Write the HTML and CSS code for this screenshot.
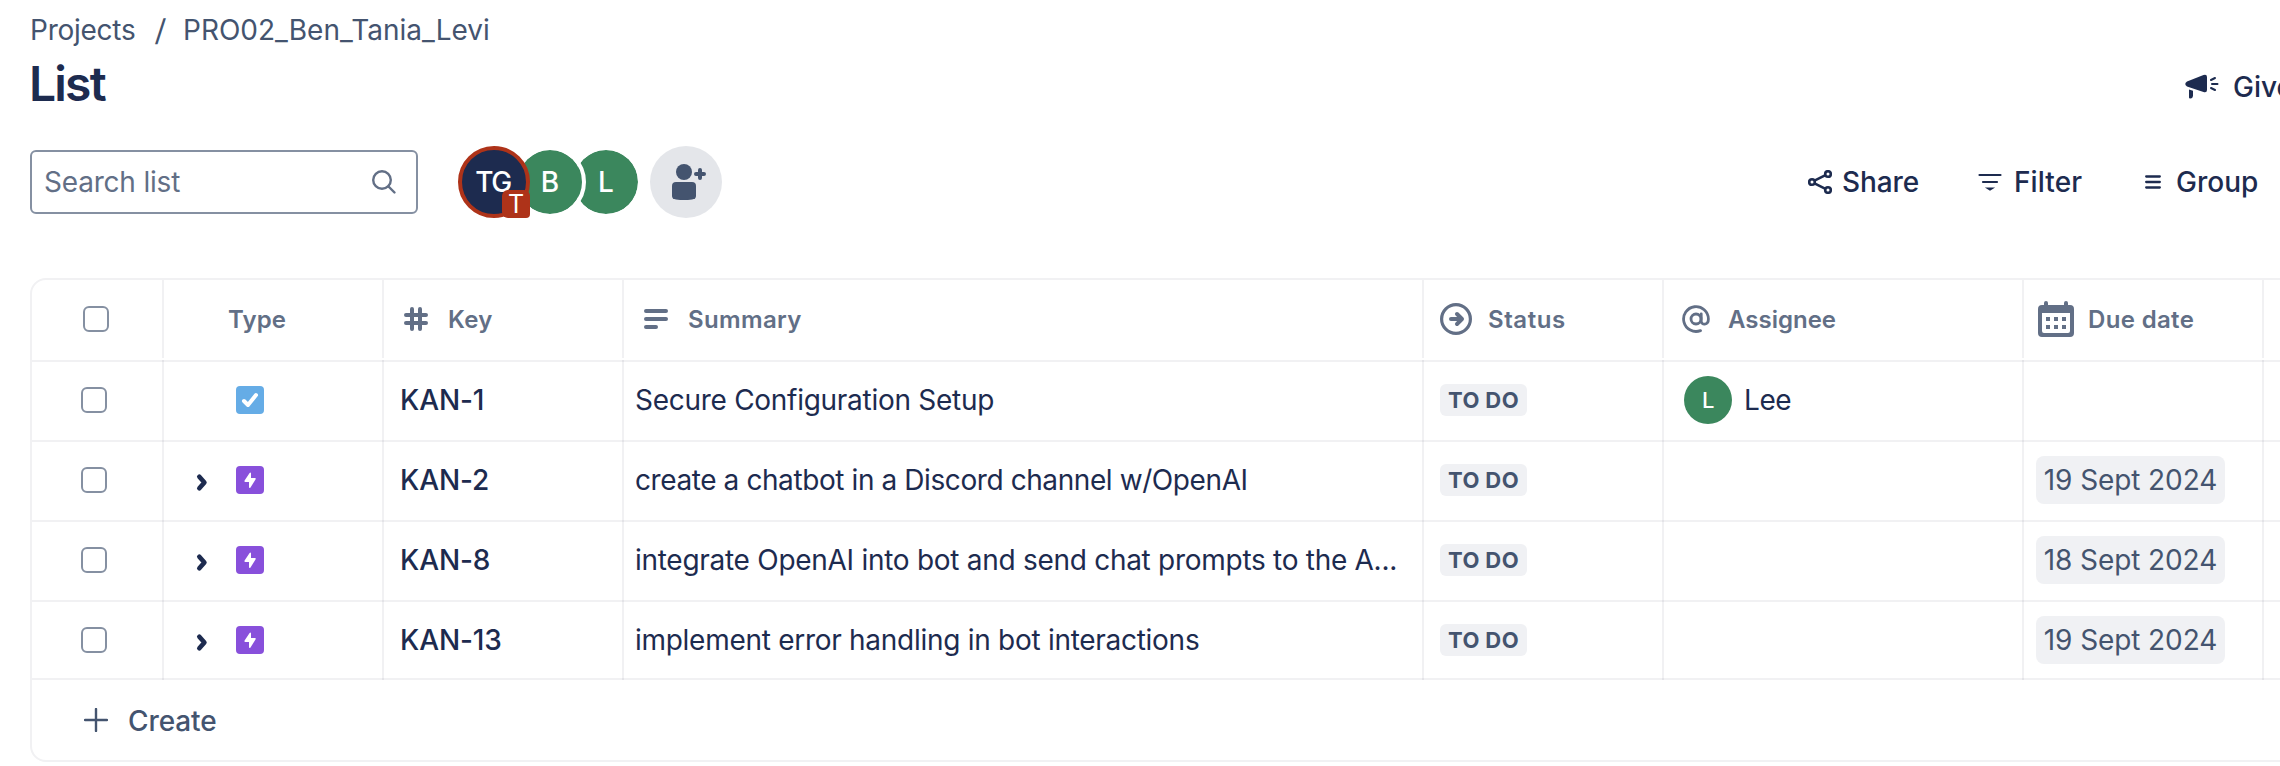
FILE: index.html
```html
<!DOCTYPE html>
<html lang="en">
<head>
<meta charset="utf-8">
<title>List</title>
<link rel="stylesheet" href="styles.css">
</head>
<body>
<svg class="sprite" aria-hidden="true">
  <symbol id="chevron" viewBox="0 0 12 18"><path d="M3 3.500L7.800 9 3 14.500" fill="none" stroke="#1d2b4f" stroke-width="4.400" stroke-linecap="round" stroke-linejoin="round"/></symbol>
  <symbol id="epic" viewBox="0 0 28 28"><rect width="28" height="28" rx="4" fill="#8850db"/><path d="M13.6 6.9L8.6 14.6Q8 16 9.4 16H13v5.2q.4 1.500 1.500.3l5-8Q20.200 12 19 12H15V7.200Q14.600 5.800 13.600 6.900z" fill="#fff"/></symbol>
  <symbol id="task" viewBox="0 0 28 28"><rect width="28" height="28" rx="4" fill="#65ace6"/><path d="M8 15l4 4 8-10" fill="none" stroke="#fff" stroke-width="4" stroke-linecap="round" stroke-linejoin="round"/></symbol>
</svg>
<main class="page">
  <nav class="crumbs"><span class="crumb-a">Projects</span><span class="slash">/</span><span class="crumb-b">PRO02_Ben_Tania_Levi</span></nav>
  <header class="title-row">
    <h1>List</h1>
    <div class="feedback">
      <svg width="34" height="26" viewBox="0 0 34 26"><path d="M2 7.500L18.500 1Q22 0 22 3V16q0 3-3.500 2L2 12.500Q-1.500 10 2 7.500z" fill="#1d2b4f"/><path d="M4 15.500l4 1.300v5.200q-.5 2.500-2.500 2.500T4 23z" fill="#1d2b4f"/><path d="M26 6l4-2M27 10h5.500M26 14l4 2" stroke="#1d2b4f" stroke-width="2" stroke-linecap="round"/></svg>
      <span>Give</span>
    </div>
  </header>
  <section class="toolbar">
    <div class="search"><span>Search list</span>
      <svg width="26" height="26" viewBox="0 0 26 26" fill="none" stroke="#626f86" stroke-width="2.400" stroke-linecap="round"><circle cx="11" cy="11" r="8.800"/><path d="M17.500 17.500l6 6"/></svg>
    </div>
    <div class="avatars">
      <div class="avatar tg">TG<span class="badge">T</span></div>
      <div class="avatar b">B</div>
      <div class="avatar l">L</div>
    </div>
    <div class="add">
      <svg width="72" height="72" viewBox="0 0 72 72"><g fill="#44546f"><circle cx="34" cy="26" r="8"/><path d="M26 36h16q4 0 4 4v10q0 3-4 3.500-8 1-16 0-4-.5-4-3.500V40q0-4 4-4z"/></g><path d="M46 28h8M50 24v8" stroke="#44546f" stroke-width="4" stroke-linecap="round"/></svg>
    </div>
    <div class="actions">
      <div class="action"><svg width="24" height="24" viewBox="0 0 24 24" fill="none" stroke="#1d2b4f" stroke-width="2.600"><circle cx="4" cy="12" r="2.800"/><circle cx="20" cy="4" r="2.800"/><circle cx="20" cy="20" r="2.800"/><path d="M6.500 10.700l11-5.500M6.500 13.300l11 5.500"/></svg><span class="share">Share</span></div>
      <div class="action"><svg width="24" height="24" viewBox="0 0 24 24" stroke="#1d2b4f" stroke-width="2.200" stroke-linecap="round"><path d="M1.500 5h21M5 12h14"/><path d="M10.500 18.500h3l-1.500 1z" fill="#1d2b4f"/></svg><span class="filter">Filter</span></div>
      <div class="action"><svg width="16" height="24" viewBox="0 0 16 24" stroke="#1d2b4f" stroke-width="2.300" stroke-linecap="round"><path d="M1.200 6.500h13.600M1.200 12h13.600M1.200 17.500h13.600"/></svg><span class="group">Group</span></div>
    </div>
  </section>
  <section class="table">
    <div class="row head">
      <div class="cell check"><i class="box"></i></div>
      <div class="cell type"><span>Type</span></div>
      <div class="cell key"><svg width="24" height="24" viewBox="0 0 24 24" stroke="#626f86" stroke-width="4" stroke-linecap="round"><path d="M2 8h20M2 16h20M8 2v20M16 2v20"/></svg><span>Key</span></div>
      <div class="cell summary"><svg width="24" height="20" viewBox="0 0 24 20" stroke="#626f86" stroke-width="4" stroke-linecap="round"><path d="M2 2h20M2 10h20M2 18h10"/></svg><span>Summary</span></div>
      <div class="cell status"><svg width="32" height="32" viewBox="0 0 32 32" fill="none" stroke="#626f86" stroke-width="3.200" stroke-linecap="round" stroke-linejoin="round"><circle cx="16" cy="16" r="14.400"/><path stroke-width="4" d="M11 16h10M17 11l5 5-5 5"/></svg><span>Status</span></div>
      <div class="cell assignee"><svg width="28" height="28" viewBox="0 0 28 28" fill="none" stroke="#626f86" stroke-width="2.800" stroke-linecap="round"><circle cx="14" cy="14" r="5"/><path d="M19.200 8.800V16c0 4.500 7.200 4.500 7.200-2A12.400 12.400 0 1 0 18.500 25.600"/></svg><span>Assignee</span></div>
      <div class="cell due"><svg width="36" height="36" viewBox="0 0 36 36" fill="#626f86"><path fill-rule="evenodd" d="M4 4h2V2q0-2 2-2t2 2v2h16V2q0-2 2-2t2 2v2h2q4 0 4 4v24q0 4-4 4H4q-4 0-4-4V8q0-4 4-4zM4 12v18q0 2 2 2h24q2 0 2-2V12z"/><path d="M8 16h4v4H8zM16 16h4v4h-4zM24 16h4v4h-4zM8 24h4v4H8zM16 24h4v4h-4zM24 24h4v4h-4z"/></svg><span>Due date</span></div>
      <div></div>
    </div>
    <div class="row first">
      <div class="cell check"><i class="box"></i></div>
      <div class="cell type"><svg class="kind" width="28" height="28"><use href="#task"/></svg></div>
      <div class="cell key">KAN-1</div>
      <div class="cell summary">Secure Configuration Setup</div>
      <div class="cell status"><span class="pill">TO DO</span></div>
      <div class="cell assignee"><span class="mini">L</span><span>Lee</span></div>
      <div class="cell due"></div><div></div>
    </div>
    <div class="row">
      <div class="cell check"><i class="box"></i></div>
      <div class="cell type"><svg class="chev" width="12" height="18"><use href="#chevron"/></svg><svg class="kind" width="28" height="28"><use href="#epic"/></svg></div>
      <div class="cell key">KAN-2</div>
      <div class="cell summary tight">create a chatbot in a Discord channel w/OpenAI</div>
      <div class="cell status"><span class="pill">TO DO</span></div>
      <div class="cell assignee"></div>
      <div class="cell due"><span class="date">19 Sept 2024</span></div><div></div>
    </div>
    <div class="row">
      <div class="cell check"><i class="box"></i></div>
      <div class="cell type"><svg class="chev" width="12" height="18"><use href="#chevron"/></svg><svg class="kind" width="28" height="28"><use href="#epic"/></svg></div>
      <div class="cell key">KAN-8</div>
      <div class="cell summary">integrate OpenAI into bot and send chat prompts to the A...</div>
      <div class="cell status"><span class="pill">TO DO</span></div>
      <div class="cell assignee"></div>
      <div class="cell due"><span class="date">18 Sept 2024</span></div><div></div>
    </div>
    <div class="row last">
      <div class="cell check"><i class="box"></i></div>
      <div class="cell type"><svg class="chev" width="12" height="18"><use href="#chevron"/></svg><svg class="kind" width="28" height="28"><use href="#epic"/></svg></div>
      <div class="cell key">KAN-13</div>
      <div class="cell summary">implement error handling in bot interactions</div>
      <div class="cell status"><span class="pill">TO DO</span></div>
      <div class="cell assignee"></div>
      <div class="cell due"><span class="date">19 Sept 2024</span></div><div></div>
    </div>
    <div class="create"><svg width="24" height="24" viewBox="0 0 24 24" stroke="#44546f" stroke-width="2.400" stroke-linecap="round"><path d="M12 1v22M1 12h22"/></svg><span>Create</span></div>
  </section>
</main>
</body>
</html>
```
FILE: styles.css
```css
* { box-sizing: border-box; }
body {
  margin: 0;
  overflow: hidden;
  background: #fff;
  color: #1d2b4f;
  font: 400 28px/40px Inter, "Liberation Sans", sans-serif;
  white-space: nowrap;
}
svg { display: block; flex: none; }
.sprite { position: absolute; width: 0; height: 0; }
.page { width: 2280px; height: 766px; padding: 10px 0 0 30px; overflow: hidden; }

.crumbs { display: flex; height: 40px; color: #44546f; }
.crumb-a { width: 124px; letter-spacing: -.25px; }
.slash { width: 27px; padding-left: 1px; font-size: 30px; transform: skewX(-3deg); }
.crumb-b { letter-spacing: 0; padding-left: 2px; }

.title-row { display: flex; align-items: center; justify-content: space-between; height: 66px; }
h1 { margin: 0; font-size: 48px; font-weight: 600; letter-spacing: -1.8px; line-height: 60px; margin-left: -1px; padding-top: 1px; }
.feedback { display: flex; align-items: center; gap: 14px; width: 95px; padding-top: 7px; font-weight: 500; }

.toolbar { display: flex; align-items: center; height: 72px; margin-top: 30px; }
.search {
  display: flex; align-items: center; justify-content: space-between;
  width: 388px; height: 64px; padding: 0 19px 0 12px;
  border: 2px solid #8590a2; border-radius: 6px;
  color: #626f86; letter-spacing: -.2px;
}
.avatars { display: flex; margin-left: 40px; }
.avatar {
  position: relative; display: grid; place-items: center;
  width: 72px; height: 72px; margin-right: -16px;
  border: 4px solid #fff; border-radius: 50%;
  background: #3b875d; background-clip: padding-box;
  color: #fff; font-weight: 500;
}
.tg { z-index: 3; border-color: #ae3319; background-color: #1d2b4f; background-clip: border-box; letter-spacing: -1.5px; padding-right: 2px; }
.b { z-index: 2; }
.l { z-index: 1; margin-right: 0; }
.badge {
  position: absolute; right: -4px; bottom: -4px; width: 28px; height: 28px;
  border-radius: 6px 6px 4px 6px; background: #ae3319; line-height: 29px; text-align: center;
  font-size: 25px; font-weight: 400; letter-spacing: 0;
}
.add { width: 72px; height: 72px; margin-left: 8px; border-radius: 50%; background: #e4e6ea; }
.actions { display: flex; margin-left: auto; padding-right: 22px; font-weight: 500; gap: 59px; }
.action { display: flex; align-items: center; }
.share { margin-left: 10px; width: 78px; letter-spacing: -.1px; }
.filter { margin-left: 12px; width: 70px; letter-spacing: .1px; }
.action:nth-child(2) { margin-left: -1px; }
.action:nth-child(3) { margin-left: 2px; }
.group { margin-left: 15px; width: 82px; }

.table { width: 2400px; margin-top: 60px; border: 2px solid #f1f1f3; border-radius: 16px; }
.row {
  display: grid;
  grid-template-columns: 132px 220px 240px 800px 240px 360px 240px 1fr;
  height: 80px; border-bottom: 2px solid rgba(15, 20, 50, .06);
}
.cell { display: flex; align-items: center; margin-bottom: -2px; padding-bottom: 4px; border-right: 2px solid rgba(15, 20, 50, .06); }
.first .cell { margin-top: -2px; padding-top: 2px; }
.last { height: 78px; }
.last .cell { padding-bottom: 2px; }
.check { padding-left: 49px; }
.box { width: 26px; height: 26px; border: 2px solid #8590a2; border-radius: 6px; }
.type { padding-left: 31px; }
.kind { margin-left: auto; margin-right: 118px; }
.chev { width: 13px; height: 19px; margin-top: 4px; margin-left: 1px; }
.key { padding-left: 16px; font-weight: 500; letter-spacing: -.1px; }
.summary { padding-left: 11px; letter-spacing: -.28px; }
.summary.tight { letter-spacing: -.41px; }
.status { padding-left: 16px; }
.pill {
  width: 87px; height: 32px; border-radius: 6px; background: #f0f1f4; color: #44546f;
  font-size: 22px; line-height: 33px; font-weight: 700; text-align: center; letter-spacing: .4px;
}
.assignee { padding-left: 20px; letter-spacing: -.4px; }
.mini {
  width: 48px; height: 48px; margin-right: 12px; border-radius: 50%;
  background: #3b875d; color: #fff; font-size: 22px; font-weight: 500; line-height: 48px; text-align: center;
}
.due { padding-left: 12px; }
.date { width: 189px; height: 48px; border-radius: 8px; background: #f0f1f4; color: #44546f; line-height: 48px; text-align: center; letter-spacing: -.1px; }

.head { height: 82px; color: #626f86; font-size: 24px; }
.head .cell { margin-bottom: 2px; padding-bottom: 0; letter-spacing: .35px; font-weight: 600; }
.head .cell span { padding-top: 2px; }
.head .check { padding-left: 51px; }
.head .type { padding-left: 64px; letter-spacing: .1px; }
.head .key { padding-left: 20px; gap: 20px; }
.head .summary { padding-left: 20px; gap: 20px; }
.head .status { letter-spacing: .55px; gap: 16px; }
.head .assignee { padding-left: 18px; gap: 18px; letter-spacing: 0; }
.head .due { padding-left: 14px; gap: 14px; }

.create { display: flex; align-items: center; gap: 20px; height: 80px; padding-left: 52px; color: #44546f; font-weight: 500; letter-spacing: -.1px; }
.create span { padding-top: 2px; }
```
